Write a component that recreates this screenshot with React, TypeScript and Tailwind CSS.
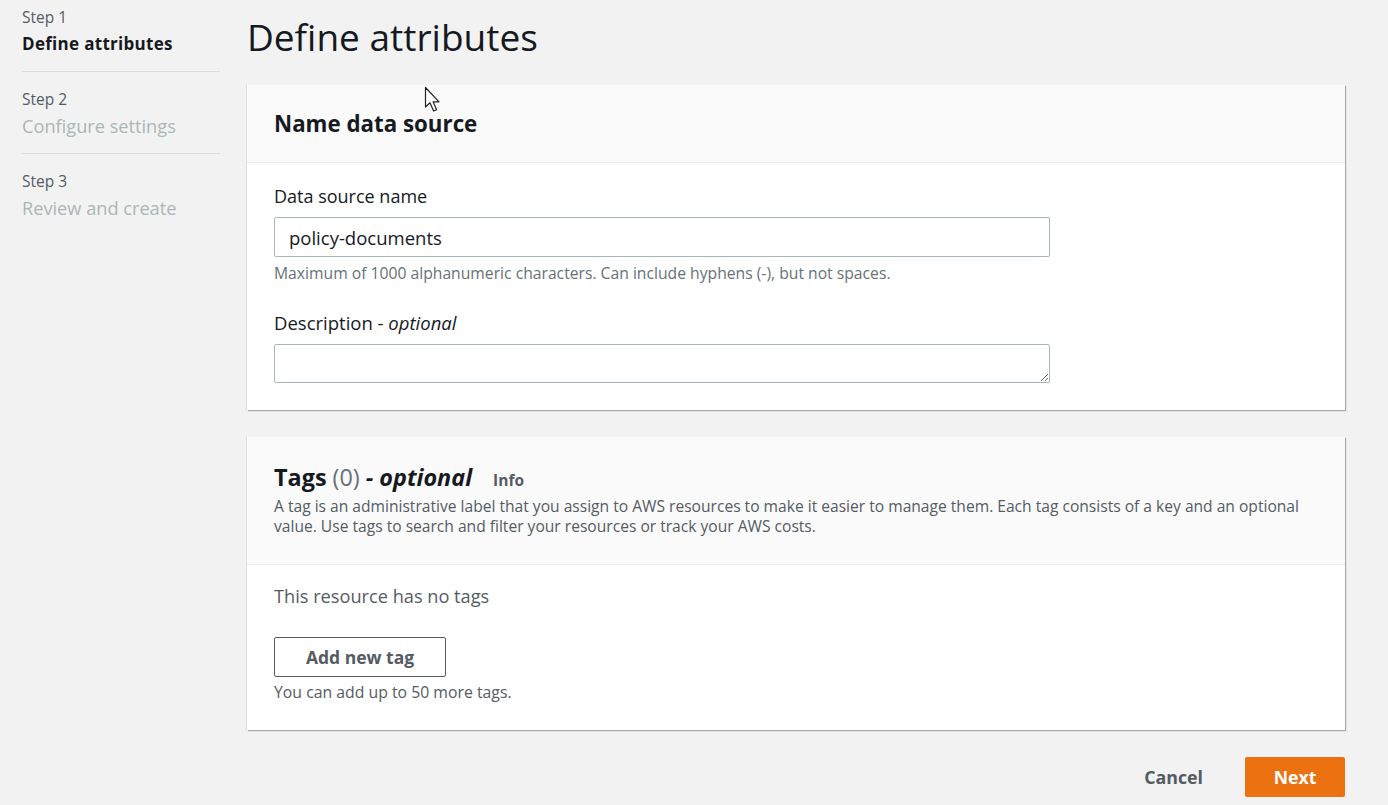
import React from 'react';

const steps = [
  { step: 'Step 1', title: 'Define attributes', active: true },
  { step: 'Step 2', title: 'Configure settings', active: false },
  { step: 'Step 3', title: 'Review and create', active: false },
];

function Cursor() {
  return (
    <svg
      className="absolute left-[424px] top-[86px]"
      width="20"
      height="28"
      viewBox="0 0 20 28"
    >
      <path
        d="M1.5 1.5 L1.5 21 L6 16.8 L9.6 25 L12.6 23.7 L9.1 15.8 L15 15.8 Z"
        fill="#fff"
        stroke="#222"
        strokeWidth="1.2"
        strokeLinejoin="round"
      />
    </svg>
  );
}

export default function App() {
  return (
    <div
      className="relative flex min-h-[805px] w-full bg-[#f2f2f2] text-[#16191f]"
      style={{ fontFamily: '"Open Sans", "Noto Sans", Arial, sans-serif' }}
    >
      {/* Steps sidebar */}
      <nav className="w-[247px] shrink-0 pl-[22px] pr-[27px] pt-[6px]">
        {steps.map((s, i) => (
          <div
            key={s.step}
            className={i < steps.length - 1 ? 'border-b border-[#dcdcdc] pb-[11px] mb-[16px]' : ''}
          >
            <div className="text-[15.5px] leading-[22px] text-[#545b64]">{s.step}</div>
            <div
              className={
                s.active
                  ? 'text-[17px] leading-[32px] font-bold tracking-[0.3px] text-[#16191f]'
                  : 'text-[18.2px] leading-[32px] text-[#aab7b8]'
              }
            >
              {s.title}
            </div>
          </div>
        ))}
      </nav>

      {/* Main content */}
      <main className="flex-1 pr-[43px]">
        <h1 className="pt-[12px] text-[37px] leading-[50px] font-normal text-[#16191f]">
          Define attributes
        </h1>

        {/* Name data source */}
        <section className="mt-[23px] bg-white shadow-[1px_1px_1px_rgba(0,0,0,0.3),-1px_0_0_rgba(0,0,0,0.08)]">
          <div className="h-[78px] flex items-center px-[27px] bg-[#fafafa] border-b border-[#eaeded]">
            <h2 className="text-[22.3px] font-bold">Name data source</h2>
          </div>
          <div className="px-[27px] pt-[21px] pb-[27px]">
            <label className="block text-[18px] leading-[24px] mb-[9px]">Data source name</label>
            <input
              readOnly
              value="policy-documents"
              className="block w-[776px] h-[40px] rounded-[2px] border border-[#aab7b8] px-[14px] text-[18.5px] text-[#16191f] outline-none"
            />
            <p className="mt-[6px] text-[15.7px] leading-[20px] text-[#687078]">
              Maximum of 1000 alphanumeric characters. Can include hyphens (-), but not spaces.
            </p>
            <label className="block mt-[28px] text-[18.5px] leading-[24px] mb-[9px]">
              Description - <i>optional</i>
            </label>
            <textarea
              className="block w-[776px] h-[39px] rounded-[2px] border border-[#aab7b8] px-[14px] text-[16px] outline-none resize-y"
            />
          </div>
        </section>

        {/* Tags */}
        <section className="mt-[27px] bg-white shadow-[1px_1px_1px_rgba(0,0,0,0.3),-1px_0_0_rgba(0,0,0,0.08)]">
          <div className="h-[128px] px-[27px] pt-[24px] bg-[#fafafa] border-b border-[#eaeded]">
            <h2 className="flex items-baseline text-[23.4px] leading-[32px]">
              <span className="font-bold">Tags</span>
              <span className="ml-[6px] text-[#687078]">(0)</span>
              <span className="ml-[6px] font-bold italic">- optional</span>
              <span className="ml-[21px] text-[15.5px] font-bold text-[#545b64]">Info</span>
            </h2>
            <p className="mt-[0px] text-[15.6px] leading-[20px] text-[#545b64]">
              A tag is an administrative label that you assign to AWS resources to make it easier to manage them. Each tag consists of a key and an optional value. Use tags to search and filter your resources or track your AWS costs.
            </p>
          </div>
          <div className="px-[27px] pt-[19px] pb-[26px]">
            <p className="text-[18.2px] leading-[24px] text-[#545b64]">This resource has no tags</p>
            <button className="mt-[29px] block w-[172px] h-[40px] rounded-[2px] border border-[#545b64] bg-white text-[17.5px] font-bold text-[#545b64]">
              Add new tag
            </button>
            <p className="mt-[3px] text-[15.8px] leading-[24px] text-[#545b64]">
              You can add up to 50 more tags.
            </p>
          </div>
        </section>

        {/* Actions */}
        <div className="mt-[27px] flex items-center justify-end gap-[42px]">
          <button className="text-[17.8px] font-bold text-[#545b64]">Cancel</button>
          <button className="w-[100px] h-[40px] rounded-[2px] bg-[#ec7211] text-[17.7px] font-bold text-white">
            Next
          </button>
        </div>
      </main>

      <Cursor />
    </div>
  );
}
